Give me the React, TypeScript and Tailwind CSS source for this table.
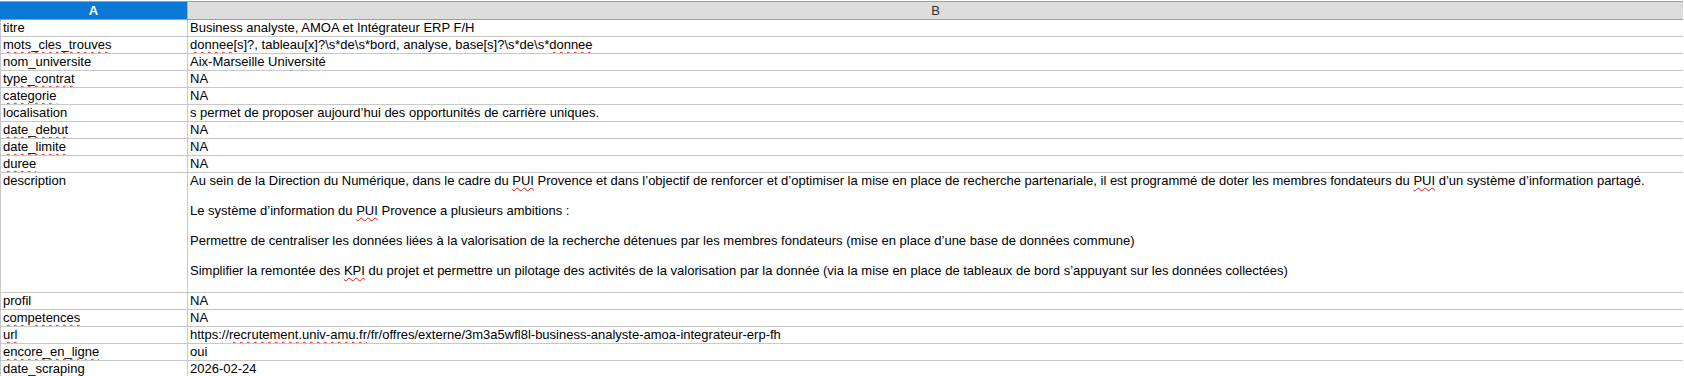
import React from "react";

const sq = "underline decoration-wavy decoration-[#e01b1b] decoration-[1px] underline-offset-[2px]";

function S({ children }: { children: React.ReactNode }) {
  return <span className={sq}>{children}</span>;
}

type Row = { k: React.ReactNode; v: React.ReactNode; tall?: boolean };

const rows: Row[] = [
  { k: "titre", v: "Business analyste, AMOA et Intégrateur ERP F/H" },
  {
    k: <S>mots_cles_trouves</S>,
    v: (
      <>
        <S>donnee</S>[s]?, tableau[x]?\s*de\s*bord, analyse, base[s]?\s*de\s*<S>donnee</S>
      </>
    ),
  },
  { k: "nom_universite", v: "Aix-Marseille Université" },
  { k: <S>type_contrat</S>, v: "NA" },
  { k: <S>categorie</S>, v: "NA" },
  { k: "localisation", v: "s permet de proposer aujourd’hui des opportunités de carrière uniques." },
  { k: <S>date_debut</S>, v: "NA" },
  { k: <S>date_limite</S>, v: "NA" },
  { k: <S>duree</S>, v: "NA" },
  {
    k: "description",
    tall: true,
    v: (
      <>
        <div>
          Au sein de la Direction du Numérique, dans le cadre du <S>PUI</S> Provence et dans l’objectif de renforcer et d’optimiser la mise en place de recherche partenariale, il est programmé de doter les membres fondateurs du <S>PUI</S> d’un système d’information partagé.
        </div>
        <div>&nbsp;</div>
        <div>
          Le système d’information du <S>PUI</S> Provence a plusieurs ambitions :
        </div>
        <div>&nbsp;</div>
        <div>
          Permettre de centraliser les données liées à la valorisation de la recherche détenues par les membres fondateurs (mise en place d’une base de données commune)
        </div>
        <div>&nbsp;</div>
        <div>
          Simplifier la remontée des <S>KPI</S> du projet et permettre un pilotage des activités de la valorisation par la donnée (via la mise en place de tableaux de bord s’appuyant sur les données collectées)
        </div>
      </>
    ),
  },
  { k: "profil", v: "NA" },
  { k: <S>competences</S>, v: "NA" },
  {
    k: <S>url</S>,
    v: (
      <>
        https://<S>recrutement.univ-amu.fr</S>/fr/offres/externe/3m3a5wfl8l-business-analyste-amoa-integrateur-erp-fh
      </>
    ),
  },
  { k: <S>encore_en_ligne</S>, v: "oui" },
  { k: <S>date_scraping</S>, v: "2026-02-24" },
];

export default function App() {
  return (
    <div
      className="w-[1684px] h-[376px] overflow-hidden bg-white pt-[1px] text-black"
      style={{ fontFamily: '"Liberation Sans", Arial, sans-serif' }}
    >
      <div className="w-[1683px] text-[13px]">
        <div className="grid grid-cols-[188px_1fr] h-[19px] border-y border-[#a0a0a0] bg-[#dddddd]">
          <div className="flex items-center justify-center bg-[#0b78d6] border-r border-[#b0b0b0] text-white font-bold text-[13px] leading-[17px]">
            A
          </div>
          <div className="flex items-center justify-center text-[#333] text-[13px] leading-[17px]">B</div>
        </div>
        {rows.map((r, i) => (
          <div
            key={i}
            className={
              "grid grid-cols-[188px_1fr] border-b border-[#c8c8c8] " +
              (r.tall ? "h-[120px]" : "h-[17px]")
            }
          >
            <div className="border-l border-r border-[#c8c8c8] pl-[2px] leading-[16px] whitespace-nowrap overflow-hidden">
              {r.k}
            </div>
            <div
              className={
                "pl-[2px] whitespace-nowrap overflow-hidden " +
                (r.tall ? "leading-[15px]" : "leading-[16px]")
              }
            >
              {r.v}
            </div>
          </div>
        ))}
      </div>
    </div>
  );
}
